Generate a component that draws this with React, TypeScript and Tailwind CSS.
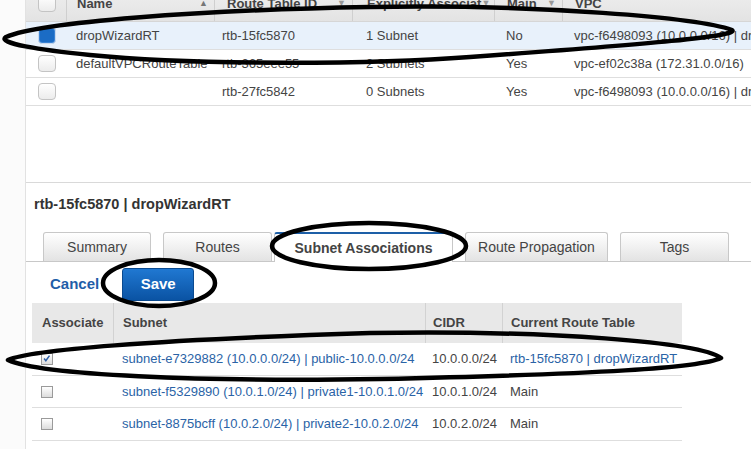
import React from "react";

const routeTables = [
  { name: "dropWizardRT", id: "rtb-15fc5870", assoc: "1 Subnet", main: "No", vpc: "vpc-f6498093 (10.0.0.0/16) | dropWizardVPC", selected: true },
  { name: "defaultVPCRouteTable", id: "rtb-365eee55", assoc: "2 Subnets", main: "Yes", vpc: "vpc-ef02c38a (172.31.0.0/16)", selected: false },
  { name: "", id: "rtb-27fc5842", assoc: "0 Subnets", main: "Yes", vpc: "vpc-f6498093 (10.0.0.0/16) | dropWizardVPC", selected: false },
];

const subnets = [
  { subnet: "subnet-e7329882 (10.0.0.0/24) | public-10.0.0.0/24", cidr: "10.0.0.0/24", rt: "rtb-15fc5870 | dropWizardRT", link: true, checked: true },
  { subnet: "subnet-f5329890 (10.0.1.0/24) | private1-10.0.1.0/24", cidr: "10.0.1.0/24", rt: "Main", link: false, checked: false },
  { subnet: "subnet-8875bcff (10.0.2.0/24) | private2-10.0.2.0/24", cidr: "10.0.2.0/24", rt: "Main", link: false, checked: false },
];

function RoundBox({ on }: { on?: boolean }) {
  return on ? (
    <div className="w-[18px] h-[17px] rounded-[4px] border border-[#c9d9ee] bg-[#1b6cc5] shadow-[inset_0_0_0_1px_#3a83d4]" />
  ) : (
    <div className="w-[18px] h-[17px] rounded-[4px] border border-[#c4c4c4] bg-gradient-to-b from-white to-[#ececec]" />
  );
}

function SmallBox({ on }: { on?: boolean }) {
  return (
    <div className="relative w-[12px] h-[12px] border border-[#9a9a9a] bg-gradient-to-b from-white to-[#dcdcdc]">
      {on && (
        <svg viewBox="0 0 12 12" className="absolute left-0 top-0 w-[10px] h-[10px]">
          <path d="M2.5 5.5 L4.6 8 L9 2" fill="none" stroke="#2c5ea6" strokeWidth={1.8} />
        </svg>
      )}
    </div>
  );
}

function Tab({ label, active, className }: { label: string; active?: boolean; className: string }) {
  if (active) {
    return (
      <div className={`h-[30px] -mb-px flex items-center justify-center bg-white border-x border-[#c8c8c8] border-t-2 border-t-[#1d5fa7] rounded-t-[3px] text-[14px] font-bold text-[#444] ${className}`}>
        {label}
      </div>
    );
  }
  return (
    <div className={`h-[29px] flex items-center justify-center border border-b-0 border-[#c8c8c8] rounded-t-[3px] bg-gradient-to-b from-white to-[#e3e3e3] text-[14px] text-[#444] ${className}`}>
      {label}
    </div>
  );
}

export default function App() {
  return (
    <div className="relative w-[751px] h-[449px] overflow-hidden bg-white font-['Liberation_Sans',Arial,sans-serif] text-[#444]">
      <div className="flex h-full">
        <div className="w-[26px] shrink-0 bg-[#fbfbfb] border-r border-[#e2e2e2]" />
        <div className="flex-1 min-w-0 flex flex-col">
          {/* route tables list */}
          <div className="-mt-[14px] grid grid-cols-[40px_148px_138px_142px_68px_1fr] h-[36px] bg-gradient-to-b from-[#f0f0f0] to-[#e3e3e3] border-b border-[#d6d6d6] text-[13px] font-bold text-[#444]">
            <div className="flex items-center justify-center pl-[2px]"><RoundBox /></div>
            <div className="flex items-center justify-between pl-[10px] pr-[6px] border-l border-[#cfcfcf]"><span>Name</span><span className="text-[9px] text-[#777]">▲</span></div>
            <div className="flex items-center justify-between pl-[12px] pr-[6px] border-l border-[#cfcfcf]"><span>Route Table ID</span><span className="text-[9px] text-[#999]">▼</span></div>
            <div className="flex items-center pl-[14px] border-l border-[#cfcfcf] whitespace-nowrap overflow-hidden"><span>Explicitly Associat</span><span className="text-[9px] text-[#999]">▼</span></div>
            <div className="flex items-center justify-between pl-[12px] pr-[6px] border-l border-[#cfcfcf]"><span>Main</span><span className="text-[9px] text-[#999]">▼</span></div>
            <div className="flex items-center pl-[12px] border-l border-[#cfcfcf]">VPC</div>
          </div>
          {routeTables.map((r) => (
            <div
              key={r.id}
              className={`grid grid-cols-[40px_148px_138px_142px_68px_1fr] h-[28px] border-b border-[#dedede] text-[13px] text-[#444] whitespace-nowrap ${r.selected ? "bg-[#e8f1fb]" : "bg-white"}`}
            >
              <div className="flex items-center justify-center pl-[2px]"><RoundBox on={r.selected} /></div>
              <div className="flex items-center pl-[10px] overflow-hidden">{r.name}</div>
              <div className="flex items-center pl-[8px]">{r.id}</div>
              <div className="flex items-center pl-[14px]">{r.assoc}</div>
              <div className="flex items-center pl-[12px]">{r.main}</div>
              <div className="flex items-center pl-[12px] overflow-hidden">{r.vpc}</div>
            </div>
          ))}

          {/* details pane */}
          <div className="mt-[76px] border-t border-[#d9d9d9]">
            <div className="pl-[8px] pt-[13px] text-[14.5px] font-bold text-[#333] leading-[17px]">rtb-15fc5870 | dropWizardRT</div>
            <div className="mt-[19px] flex items-end border-b border-[#c8c8c8]">
              <Tab label="Summary" className="ml-[17px] w-[108px]" />
              <Tab label="Routes" className="ml-[12px] w-[109px]" />
              <Tab label="Subnet Associations" active className="ml-[2px] w-[179px]" />
              <Tab label="Route Propagation" className="ml-[12px] w-[143px]" />
              <Tab label="Tags" className="ml-[12px] w-[109px]" />
            </div>

            <div className="mt-[6px] flex items-center h-[33px]">
              <span className="ml-[24px] text-[15px] font-bold text-[#1f5ea8]">Cancel</span>
              <button className="ml-[23px] w-[72px] h-[33px] rounded-[3px] border border-[#0a4a90] bg-gradient-to-b from-[#2078d2] to-[#0a53a3] text-[15px] font-bold text-white">
                Save
              </button>
            </div>

            <div className="mt-[2px] ml-[6px] w-[650px]">
              <div className="grid grid-cols-[81px_312px_77px_180px] h-[40px] bg-[#e8e8e8] text-[13px] font-bold text-[#444]">
                <div className="flex items-center pl-[10px]">Associate</div>
                <div className="flex items-center pl-[9px] border-l border-[#d2d2d2]">Subnet</div>
                <div className="flex items-center pl-[7px] border-l border-[#d2d2d2]">CIDR</div>
                <div className="flex items-center pl-[8px] border-l border-[#d2d2d2]">Current Route Table</div>
              </div>
              {subnets.map((s, i) => (
                <div
                  key={s.subnet}
                  className={`grid grid-cols-[81px_312px_77px_180px] ${i === 1 ? "h-[32px]" : "h-[33px]"} border-b border-[#dedede] text-[13px] whitespace-nowrap`}
                >
                  <div className="flex items-center pl-[9px]"><SmallBox on={s.checked} /></div>
                  <div className="flex items-center pl-[9px] text-[#2a63a6]">{s.subnet}</div>
                  <div className="flex items-center pl-[7px] text-[#444]">{s.cidr}</div>
                  <div className={`flex items-center pl-[8px] ${s.link ? "text-[#2a63a6]" : "text-[#444]"}`}>{s.rt}</div>
                </div>
              ))}
            </div>
          </div>
        </div>
      </div>

      {/* hand-drawn annotation rings */}
      <svg className="absolute left-0 top-0 w-[751px] h-[449px] pointer-events-none" viewBox="0 0 751 449">
        <g fill="none" stroke="#000" strokeWidth={4.5} strokeLinejoin="round">
          <path d="M6 37 C40 22 200 10 370 7 C540 4 700 18 732 30 C740 36 650 44 470 57 C380 64 200 66 90 55 C40 50 -4 43 6 37 Z" />
          <ellipse cx={369} cy={246} rx={97} ry={23} />
          <ellipse cx={159} cy={283} rx={56} ry={23} />
          <path d="M8 360 C30 350 150 340 370 333 C550 330 700 342 721 358 C700 368 600 374 380 379 C200 382 40 375 8 360 Z" />
        </g>
      </svg>
    </div>
  );
}
